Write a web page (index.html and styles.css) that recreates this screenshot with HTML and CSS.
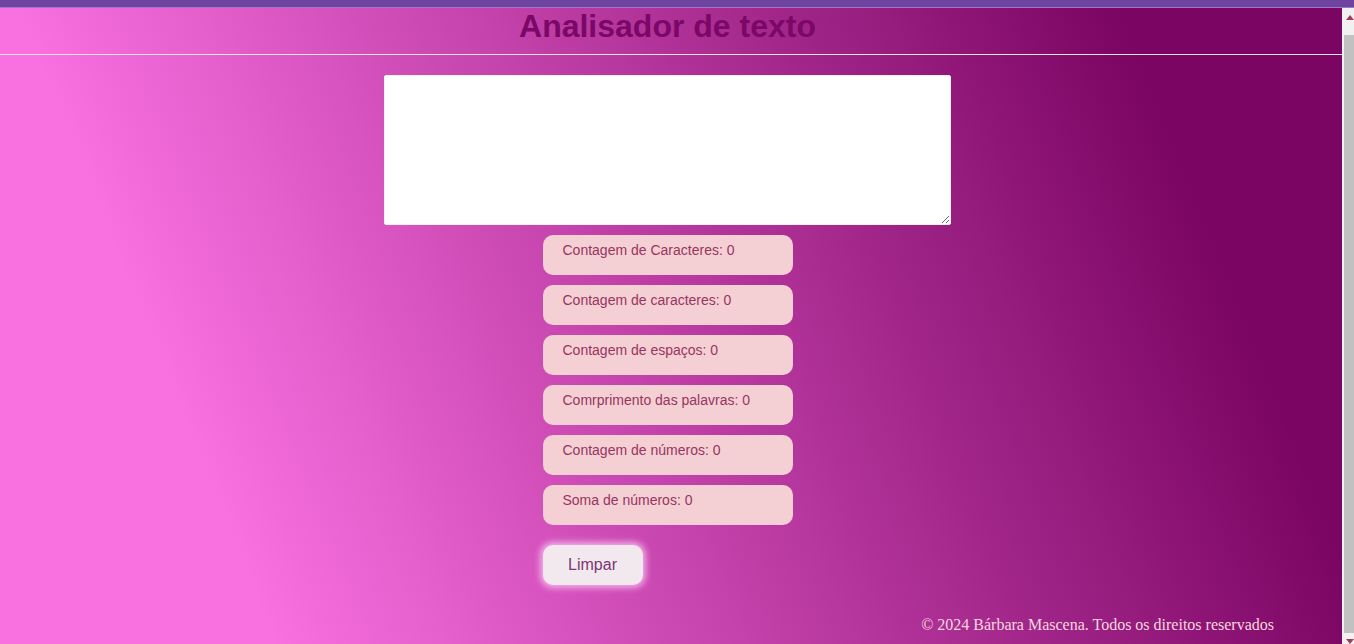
FILE: index.html
```html
<!DOCTYPE html>
<html lang="pt-BR">
<head>
<meta charset="utf-8">
<title>Analisador de texto</title>
<link rel="stylesheet" href="styles.css">
</head>
<body>
<div class="topbar"></div>
<div class="window">
  <div class="page">
    <header class="header">
      <h1 class="title">Analisador de texto</h1>
    </header>
    <main class="main">
      <textarea class="input"></textarea>
      <div class="results">
        <div class="stat">Contagem de Caracteres: 0</div>
        <div class="stat">Contagem de caracteres: 0</div>
        <div class="stat">Contagem de espaços: 0</div>
        <div class="stat">Comrprimento das palavras: 0</div>
        <div class="stat">Contagem de números: 0</div>
        <div class="stat">Soma de números: 0</div>
        <button class="clear" type="button">Limpar</button>
      </div>
    </main>
    <footer class="footer">© 2024 Bárbara Mascena. Todos os direitos reservados</footer>
  </div>
  <div class="scrollbar">
    <div class="sb-up">
      <svg class="sb-arrow" width="8" height="5" viewBox="0 0 8 5"><polygon points="0,5 4,0 8,5" fill="#a03c5c"/></svg>
    </div>
    <div class="sb-thumb"></div>
    <div class="sb-down">
      <svg class="sb-arrow" width="8" height="5" viewBox="0 0 8 5"><polygon points="0,0 8,0 4,5" fill="#a03c5c"/></svg>
    </div>
  </div>
</div>
</body>
</html>
```

FILE: styles.css
```css
html, body {
  margin: 0;
  padding: 0;
  overflow: hidden;
  width: 1354px;
  height: 644px;
}

.topbar {
  height: 7px;
  background: #6e44a0;
  border-bottom: 1px solid #9c7dc9;
}

.window {
  display: flex;
  height: 636px;
  overflow: hidden;
}

.page {
  flex: none;
  width: 1342px;
  background: linear-gradient(68deg, #f970e1 0%, #f970e1 17%, #7b0563 86%, #7b0563 100%);
  font-family: "Liberation Sans", Arial, sans-serif;
}

.scrollbar {
  flex: none;
  width: 12px;
  background: #f1f1f1;
  display: flex;
  flex-direction: column;
}

.sb-up {
  height: 27px;
  padding: 7px 0 0 4px;
  box-sizing: border-box;
}

.sb-arrow {
  display: block;
}

.sb-thumb {
  height: 601px;
  margin-left: 2px;
  background: #c1c1c1;
}

.sb-down {
  padding: 6px 0 0 4px;
}

.header {
  padding-bottom: 10px;
  border-bottom: 1px solid #ece2ec;
}

.title {
  margin: 0;
  padding-right: 7px;
  font-size: 32px;
  line-height: 36px;
  font-weight: bold;
  color: #7b0766;
  text-align: center;
}

.main {
  display: flex;
  flex-direction: column;
  align-items: center;
  padding-right: 7px;
  margin-top: 20px;
}

.input {
  box-sizing: border-box;
  width: 567px;
  height: 150px;
  margin: 0;
  border: 1px solid #f2f2f2;
  border-radius: 2px;
  background: #ffffff;
  display: block;
}

.results {
  width: 250px;
  margin-top: 10px;
  display: flex;
  flex-direction: column;
  gap: 10px;
}

.stat {
  box-sizing: border-box;
  height: 40px;
  padding: 7px 20px 0;
  border-radius: 10px;
  background: #f4cfd4;
  color: #98355f;
  font-size: 14px;
  line-height: 16px;
}

.clear {
  align-self: flex-start;
  margin-top: 10px;
  width: 100px;
  height: 40px;
  border: none;
  border-radius: 10px;
  background: #f1e9ee;
  color: #7f3572;
  font-family: "Liberation Sans", Arial, sans-serif;
  font-size: 16px;
  box-shadow: 0 0 6px 3px rgba(255, 205, 245, 0.75);
}

.footer {
  padding: 31px 68px 30px 0;
  text-align: right;
  font-family: "Liberation Serif", "Times New Roman", serif;
  font-size: 16px;
  color: #f6d6df;
}
```
